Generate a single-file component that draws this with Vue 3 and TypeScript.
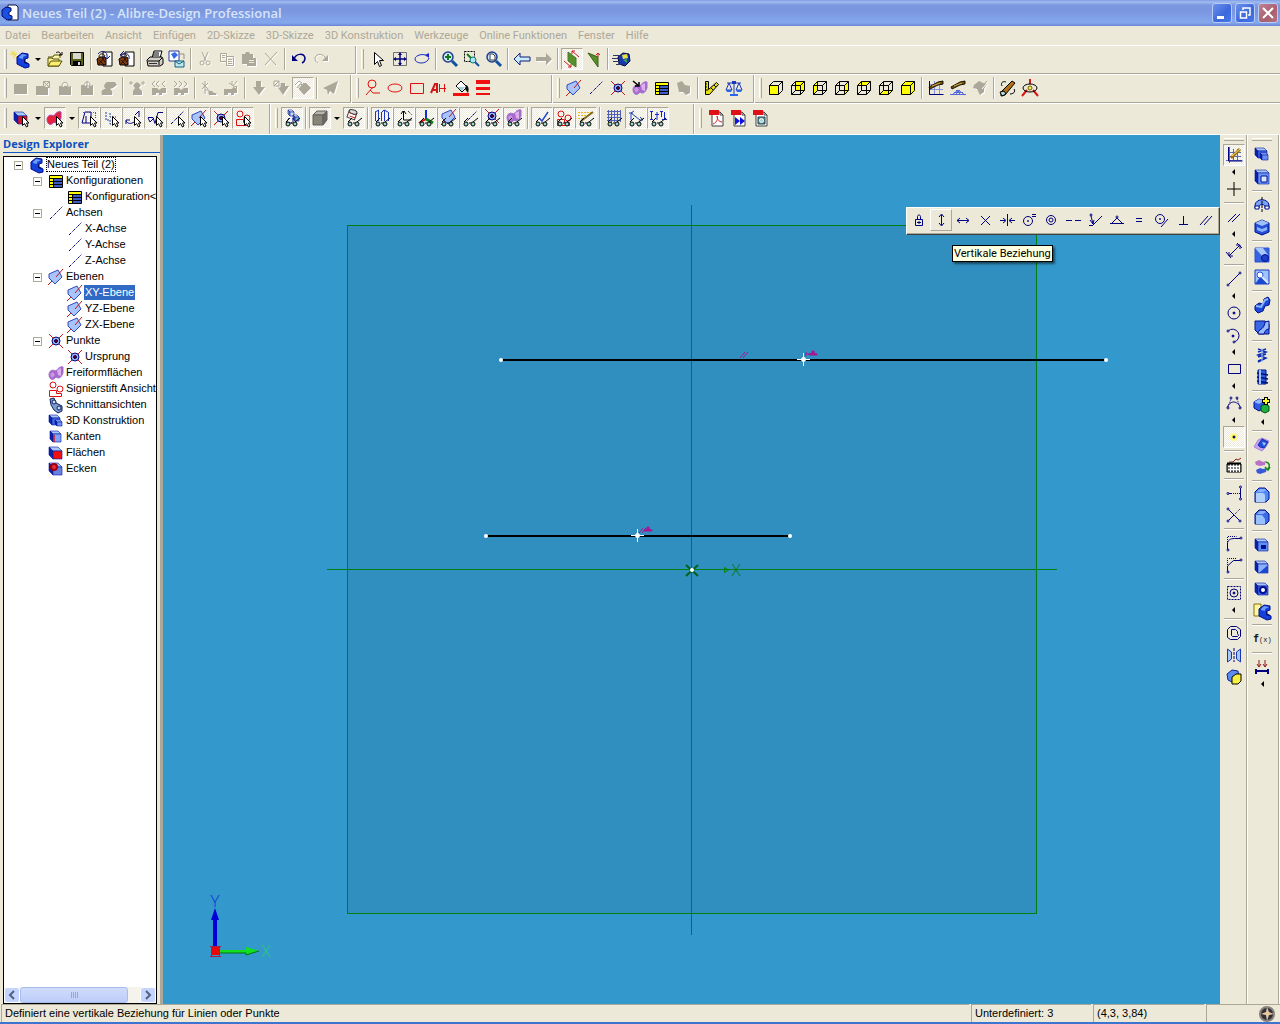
<script setup lang="ts">
import { computed, ref } from 'vue'

/* ---------- drawing helpers for the 16 x 16 icons ---------- */
const NAVY = '#000080'
const RED = '#e01010'
const GREY = '#aca899'

const L = (d: string, c = NAVY, w = 1, extra = ''): string =>
  `<path d="${d}" fill="none" stroke="${c}" stroke-width="${w}" ${extra}/>`
const F = (d: string, c: string, s = 'none', w = 1): string =>
  `<path d="${d}" fill="${c}" stroke="${s}" stroke-width="${w}"/>`
const O = (x: number, y: number, r: number, f = 'none', s = NAVY, w = 1): string =>
  `<circle cx="${x}" cy="${y}" r="${r}" fill="${f}" stroke="${s}" stroke-width="${w}"/>`
const off = (d: string): string =>
  `<path d="${d}" fill="#fff" transform="translate(1 1)"/><path d="${d}" fill="${GREY}"/>`
const offLine = (d: string): string =>
  `<path d="${d}" fill="none" stroke="#fff" transform="translate(1 1)"/><path d="${d}" fill="none" stroke="${GREY}"/>`
const box = (x: number, y: number, w: number, h: number, d: number, front = '#3c6ae6', top = '#a8c6fa', side = '#0c22a8'): string =>
  F(`M${x} ${y}h${w}l${d} ${d}h${-w}z`, top, '#0818a0', 0.6) +
  F(`M${x} ${y}l${d} ${d}v${h}l${-d} ${-d}z`, side, '#0818a0', 0.6) +
  F(`M${x + d} ${y + d}h${w}v${h}h${-w}z`, front, '#0818a0', 0.6)
const cube = (face: string, solid = false): string =>
  (face ? F(face, '#ffff00') : '') +
  L('M1.500 5.500h9v9h-9zM1.500 5.500l4-4h9v9l-4 4M10.500 5.500l4-4', '#000') +
  (solid ? '' : L('M5.500 1.500v9h9M5.500 10.500l-4 4', '#000'))

const cursor = F('M9.500 6.500v9l2-2 2 3.500 1.500-1-1.500-3h2.500z', '#fff', '#000')
const glasses = L('M2 12l4-4M11 12l5-4M7 13h2', '#000') + O(4, 14, 2, '#9fd8d0', '#000') + O(11, 14, 2, '#9fd8d0', '#000')
const planeShape = F('M1 5l9-4 4 7-7 7-6-6z', '#a9c4fb', '#3048c0') + L('M15 0L8 8M0 16l4-4', '#c01818')
const pointShape = L('M1 1l14 14M15 1L1 15', '#d01818') + O(8, 8, 4, '#9db4f0') + O(8, 8, 1.5, '#800020', '#000050')
const blobShape = F('M1 9c1-5 5-4 7-3 2-3 5-5 7-4v6c-2 5-4 6-7 4-3 4-7 3-7-3z', '#a868d0', '#a070c8') + F('M9 5l4-2v8l-3-1z', '#dcb0ec') + F('M2 9l3-2 2 3-3 3z', '#c898e0')
const tableShape = F('M1.500 2.500h13v12h-13z', '#ffff00', '#000') + F('M6 5h8v9H6z', '#3c5cc8') + L('M1 5.500h13M1 8.500h13M1 11.500h13M5.500 5v10', '#000')
const stampShape = O(5, 4, 3, 'none', RED) + O(12, 8, 3, 'none', RED) + L('M1.500 9.500h7v3h5v3h-12z', RED)
const dash = L('M2 14L15 1', NAVY, 1, 'stroke-dasharray="3 1 1 1"')
const partShape = F('M2 5l5-4 6 1v4l-3 1v3l4 2v3l-4 1-8-4z', '#1440dc', '#000c90') + F('M4 5l3-3 5 1-4 2v2l-4-1z', '#6c9cf8') + F('M9 7v4l3 1 1-1-3-1V7z', '#041070')
const bag = F('M0 8l3-2h5l1 2v6H1z', '#7c3c10', '#000') + L('M2 6c0-4 5-4 6-1M2 9l5 5M5 7l3 4M2 13l5-6', '#301000')
const pdf = F('M4 2h8l3 3v11H4z', '#fff', '#404040') + F('M1 0h10v5H1z', '#e01018') + L('M12 2v3h3', '#404040')
const lens = O(6, 6, 5, '#cfe8f8', '#1c3c90', 1.5) + L('M10 10l5 5', '#1050a0', 3)
const grid = L('M1.500 1v14M6.500 1v14M11.500 1v14M1 4.500h14M1 9.500h14M1 14.500h14', '#8894e0')
const tele = F('M1 7l9-5 5-1v3l-5 1-8 4z', '#6b5010', '#201800') + L('M4 6l8-3', '#d8a850')

const icons: Record<string, string> = {
  'Neu': `<g transform="translate(2 1)">${partShape}</g>` + L('M1 0v7M-3 3h7M-2 0l6 6', '#f0dc30'),
  'Öffnen': F('M1 6h5l1-2h6v3', '#fff8a0', '#505000') + F('M1 15V7h4l1 1h6v7z', '#fff39a', '#505000') + F('M1 15l3-5h11l-3 5z', '#ffee70', '#505000') + L('M9 2c2-2 4-1 5 2M12 4h3V1', '#000'),
  'Speichern': F('M1.500 1.500h13v13h-12l-1-1z', '#586018', '#000') + F('M4 2h8v6H4z', '#d8d8d0') + F('M4 10h8v4H4z', '#000') + F('M9 11h2v3H9z', '#ddd'),
  'Einchecken': F('M6 1h9v14H6z', '#fff', '#000') + bag + L('M1 3c3-4 8-3 9 1v3M7 5l3 3 3-3', '#102080'),
  'Auschecken': F('M6 1h9v14H6z', '#fff', '#000') + bag + L('M10 8c1-5-3-7-8-4M5 0L1 4l4 2', '#102080'),
  'Drucken': F('M5 7l2-7h8l-2 7z', '#fff', '#000') + F('M0 9l3-3h12l1 2v5l-3 2H1z', '#d4d0c8', '#000') + L('M1 10h11v4M12 10l3-3M7 2h5M6 4h6', '#000') + F('M2 12h8v1H2z', '#303030'),
  'Senden': F('M0 0h10v10H0z', '#fff', '#2838a0') + F('M2 3l4-2 3 3-4 4z', '#3868e8') + F('M6 10h9v6H6z', '#bfe8f0', '#106080') + L('M6 10l4 3 5-3', '#106080') + L('M11 3h4v5', '#909090'),
  'Ausschneiden': offLine('M5 1l4 9M11 1L7 10M5 10a2 2 0 1 0 .1 4a2 2 0 1 0 0-4M11 10a2 2 0 1 0 .1 4a2 2 0 1 0 0-4'),
  'Kopieren': offLine('M1.500 2.500h6v8h-6zM7.500 5.500h7v9h-7zM3 4.500h3M3 6.500h3M9 8.500h4M9 10.500h4M9 12.500h4'),
  'Einfügen': off('M1 3h3l1-2h3l1 2h3v4h3v8H6v-2H1z') + L('M8 9.500h5M8 11.500h5', '#ece9d8'),
  'Löschen': offLine('M2 2l11 12M14 1L2 14'),
  'Rückgängig': L('M3 8c2-6 10-6 11-1 0 3-1 4-3 5', NAVY, 1.5) + F('M1 4v6h6z', NAVY),
  'Wiederholen': offLine('M13 8C11 2 3 2 2 7c0 3 1 4 3 5') + off('M15 4v6H9z'),
  'Auswählen': F('M4.500 1.500v12l3-3 2 5 2-1-2-5h4z', '#fff', '#000'),
  'Verschieben': F('M1.500 1.500h13v13h-13z', '#ece9d8', '#707070') + L('M8 3v10M3 8h10', NAVY, 1.5) + F('M8 1l2 3H6zM8 15l2-3H6zM1 8l3-2v4zM15 8l-3-2v4z', NAVY),
  'Drehen': L('M13 5c-3-3-12-1-12 3 0 5 12 6 14-1', '#1828c8') + F('M11 4l4-2v5z', '#1828c8'),
  'Zoom': lens + L('M6 3v6M3 6h6', '#107818', 2),
  'Zoom Fenster': L('M.5.5h10v10H.5z', '#000', 1, 'stroke-dasharray="2 1"') + L('M3 3l4 4', '#107818', 2) + O(9, 9, 3, '#a8e8f0', '#107080') + L('M11 11l4 4', '#1050a0', 2),
  'Zoom Alles': lens + F('M4 3h3l2 2v4H4z', '#fff', '#404040'),
  'Vorherige Ansicht': F('M0 8l6-6v4h10v4H6v4z', '#c8ecf8', '#101880'),
  'Nächste Ansicht': off('M16 8l-6-6v4H0v4h10v4z'),
  '2D-Skizze aktivieren': F('M4 1l8 6v9l-8-6z', '#58902c', '#48781c') + L('M15 6L8 0M8 3V0h3M0 10l7 6M7 13v3H4', '#c81818'),
  '3D-Skizze aktivieren': F('M2 2l10 4v10z', '#58902c', '#386018') + L('M12 6V2M10 4l2-2 2 2', '#c81818'),
  'Online': F('M4 6l5-4 6 1 1 7-5 5-6-2z', '#1838b0', '#000840') + F('M8 4l5-1 1 4-5 1z', '#e8e040') + F('M9 9l4-1v4z', '#38a058') + L('M-1 4.500h7M-2 7.500h6M-1 10.500h6M2 13.500h5', '#303860'),

  'Aufsatz linear': off('M1 4h13v10H1z'),
  'Ausschnitt linear': off('M1 6h12v9H1z') + F('M8.500 1.500h6v6h-6z', '#ece9d8', GREY) + L('M9 2l5 5M14 2L9 7', GREY),
  'Lasche': off('M2 6h12v9H2z') + offLine('M5 6c0-5 6-5 6 0'),
  'Flansch': off('M2 5h12v10H2z') + offLine('M5 5c1-4 6-4 6 0M8 1v6'),
  'Ecke': off('M1 15c-1-4 0-6 4-6-3-2-2-5 1-7h8l2 3-4 3-3 1c2 1 3 3 2 6z'),
  'Biegung': off('M4 15v-4l2-3-2-3 4-3 4 3-2 3 3 3v4z') + offLine('M0 3h4M12 3h4M2 1v4M14 1v4'),
  'Abwicklung': off('M1 8h5l2 2 3-2h4v5h-4v2H8v-2H5v2H1z') + offLine('M4 1L1 4l3 3M8 1L5 4l3 3M14 1l-3 3 3 3'),
  'Faltung': off('M1 8h5l2 2 3-2h4v5h-4v2H8v-2H5v2H1z') + offLine('M1 1l3 3-3 3M6 1l3 3-3 3M11 1l3 3-3 3'),
  'Stempel': offLine('M4 1v13M1 3l6 6M7 3L1 9M4 10h4M8 10v4h8') + off('M8 11h3l2 2h2v2H8z'),
  'Loch': off('M1 9h8l2-3h3v7h-3v2H8v-2H5v2H1z') + offLine('M9 1v4M6 3l6 4M14 1l-4 5'),
  'Pfeil A': off('M5 1h5v6h4l-6 8-6-8h3z'),
  'Pfeil B': off('M7 3h5v3h4l-6 9-6-9h3z') + offLine('M1 1h5v5H1zM1 6l5-5'),
  'Pfeil C': off('M6 3h5l5 5-7 7-6-7z') + offLine('M0 5l4-4 3 2M2 8l3-4'),
  'Veröffentlichen': off('M0 8L15 1l-4 13-4-3-2 4-1-5z'),

  'Notiz': O(7, 4, 4, 'none', RED) + L('M8 7l-7 8M5 10l3 3h7', RED),
  'Ellipse': `<ellipse cx="8" cy="8" rx="7" ry="4" fill="none" stroke="${RED}"/>`,
  'Rechteck': L('M1.500 3.500h13v10h-13z', RED),
  'Beschriftung': L('M0 13l4-9h2v9M2 10h4', '#d01818', 2) + L('M8 8.500h7M8.500 4v8M13.500 4v8', RED),
  'Füllen': F('M3 6l5-5 6 6-5 5z', '#fff', '#000') + F('M13 5c3 1 3 5 2 8l-3-4z', '#101010') + F('M4 7h8l-3 4z', '#a0d0d8') + F('M0 13h16v3H0z', '#f01010'),
  'Strichstärke': F('M1 0h14v4H1zM1 7h14v3H1zM1 13h14v2H1z', '#f01010'),

  'Ebene einfügen': planeShape,
  'Achse einfügen': dash,
  'Punkt einfügen': pointShape,
  'Fläche einfügen': blobShape + L('M1 1l6 5M3 6h4V2', '#000', 1.5),
  'Konfiguration': tableShape,
  'Schnitt': off('M1 3l5-2 3 4 5 1v7l-4 2-3-3H3z'),
  'Messen': F('M1.500 1.500h3v8l8-7 2 2-9 10h-4z', '#e8e010', '#000') + L('M1 4h2M1 7h2M1 10h3M7 8l2 2M10 5l2 2', '#000'),
  'Masse': L('M8 1v13M1 3h14M3 3l-3 7h6zM13 3l-3 7h6z', '#1838c0') + F('M0 10h6l-1 2H1zM10 10h6l-1 2h-4zM4 14h8v2H4z', '#2868e8') + F('M6 1h4v3H6z', '#1838c0'),
  'Vorderansicht': cube('M1 5h10v10H1z', true),
  'Rückansicht': cube('M5 1h10v10H5z'),
  'Linke Ansicht': cube('M1 5l4-4v10l-4 4z'),
  'Rechte Ansicht': cube('M11 5l4-4v9l-4 5z'),
  'Draufsicht': cube('M1 5l4-4h10l-4 4z'),
  'Unteransicht': cube('M1 15l4-5h10l-4 5z'),
  'Isometrisch': cube('M1 5l4-4h10v10l-4 4H1z', true),
  'Raster': grid + tele + L('M1.500 1v13.500h14', NAVY),
  'Fluchtpunkt': L('M2 15l6-5 7 5M0 14.500h16M4 12.500h9M6 10l5 5M10 10l-5 5', '#5068d8') + tele,
  'Schatten': off('M2 5l5-4 4 2 4 1-3 5v3l-4 3-3-6-4-1z') + offLine('M15 1l-6 7'),
  'Rotation': F('M1 12L12 1l3 2L5 15l-4 1z', '#b07018', '#000') + L('M2 6c-2-4 2-5 4-4M14 9c2 3-1 5-4 5', '#000') + F('M0 12l4-1 2 3-4 2z', '#b8d8e8', '#000'),
  'Achsendrehung': L('M8-1v5M5 10l-5 6M11 10l5 6', '#d81818', 2) + `<ellipse cx="8" cy="8" rx="7" ry="4" fill="none" stroke="#000"/>` + O(8, 8, 2, '#f8f050', '#706000'),

  'Volumen wählen': box(1, 2, 9, 8, 4, '#e01020') + cursor,
  'Flächen wählen': F('M0 9c1-5 5-4 7-3 2-4 5-5 7-4v6c-2 5-4 6-7 4-3 4-7 3-7-3z', '#e82040', '#a840a0') + cursor,
  'Skizze wählen': L('M1 13l3-11h6v6M1 13h8M5 6v7') + L('M2 2.500h13M14.500 3v6', '#2070a0', 1, 'stroke-dasharray="1 1"') + cursor,
  'Kontur wählen': L('M3 2v8h4v4h5M7 3v4h6', '#2040a0', 1, 'stroke-dasharray="2 1"') + cursor,
  'Bemaßung wählen': L('M1 11c2 3 5 3 8 1M10 5l4-4v6M1 14v-4h4') + cursor,
  'Kante wählen': L('M1 7.500h5l2 6 3-11h5M1 8l2 4 4-4') + cursor,
  'Achse wählen': dash + cursor,
  'Ebene wählen': planeShape + cursor,
  'Punkt wählen': pointShape + cursor,
  'Stift wählen': stampShape + cursor,
  'Komponenten': box(4, 0, 4, 4, 2, '#c8e0f0', '#fff', '#78a0b8') + box(9, 5, 4, 4, 2, '#78b0d8', '#fff', '#4070a0') + L('M5 8l-3 5h6M9 8v4') + glasses,
  'Schattiert': F('M1 5l4-4h10l-4 4z', '#b8b6ac', '#606060') + F('M1 5h10v10H1z', '#888478', '#606060') + F('M11 5l4-4v9l-4 5z', '#6c695f', '#606060'),
  'Schnitt zeigen': `<g transform="rotate(20 7 5)">${F('M2 2h8v7H2z', '#fff', '#404040')}${L('M2 4h8M4 7h6', RED)}<ellipse cx="6" cy="2" rx="4" ry="2" fill="#ddd" stroke="#404040"/></g>` + glasses,
  'Teile zeigen': L('M1.500 2v9M4.500 0v11M7.500 3v8M10.500 0v11M14.500 2v9M1 2l4-2M10 0l4 2M7 3l3-3', '#1838c0') + glasses,
  'Achsen zeigen': L('M7.500 1v9h8M7 1L5 4M8 1l2 3', '#000') + L('M12 1l4 4', '#000', 1, 'stroke-dasharray="1 1"') + glasses,
  'Ursprung zeigen': L('M8 0v9', '#1030d8', 2) + L('M8 9l-7 4', '#e01010', 2) + L('M8 9l7 4', '#108018', 3) + glasses,
  'Ebenen zeigen': `<g transform="translate(1 -1)">${planeShape}</g>` + glasses,
  'Linien zeigen': dash + glasses,
  'Punkte zeigen': `<g transform="translate(0 -2)">${pointShape}</g>` + glasses,
  'Freiform zeigen': `<g transform="translate(0 -2)">${blobShape}</g>` + glasses,
  'Prüfung zeigen': L('M5 8l3 3 6-9', '#2848d0', 1.5) + glasses,
  'Stift zeigen': stampShape + glasses,
  'Licht zeigen': L('M0 2.500h14M0 5.500h9M0 8.500h5', '#f0b820', 1, 'stroke-dasharray="2 1"') + L('M3 11L15 2', '#806820', 2) + glasses,
  'Gitter zeigen': L('M1 1.500h14M1 4.500h14M1 7.500h14M1 10.500h14M2.500 0v12M5.500 0v12M8.500 0v12M11.500 0v12M14.500 0v12', '#5060b8') + glasses,
  'Maße zeigen': L('M3 10V3l3-2M3 3l9 7M1 3h4M12 7l3 3h-4', '#2048c0') + glasses,
  'Text zeigen': L('M1.500 1v9M0 1.500h3M0 9.500h3M5 4.500h4M7 2v8M10 1.500h3M11.500 1v6M14.500 2v8M12 9.500h5', '#1828c8') + glasses,
  'PDF exportieren': pdf + L('M5 14c5-2 5-7 4-8 0 3 2 6 5 6', '#d82028'),
  'PDF 3D': pdf + F('M5 7l5 4-5 4zM10 7l5 4-5 4z', '#1010e0'),
  'PDF Bild': pdf + F('M6 7h7v7H6z', '#608c90', '#204850') + O(9.5, 10.5, 2, '#a0d0d0', '#fff'),

  'Skizziermodus': L('M3.500 0v16M0 13.500h16M7.500 2v12M11.500 2v12M3 9.500h12M3 5.500h12', '#5864c0') + L('M5 11L14 2', '#a07010', 3) + L('M6 9l8-7', '#ffe860') + L('M2.500 0v14h14'),
  'Kreuz': L('M8 1v14M1 8h14', '#000'),
  'Parallel': L('M2 13l8-8M6 13l8-8'),
  'Bemaßung': L('M3 13L14 2M10 2h4v4M3 9v4h4M0 9l5 6M11 0l5 5'),
  'Linie': L('M2 14L14 2') + O(2, 14, 1, '#fff') + O(14, 2, 1, '#fff'),
  'Kreis': O(8, 8, 6) + O(8, 8, 1, NAVY),
  'Bogen': L('M2 4a6.500 6.500 0 1 1 6 11') + O(2, 4, 1, '#fff') + O(7, 9, 1, NAVY) + O(8, 15, 1, '#fff'),
  'Rechteck zeichnen': L('M2.500 3.500h12v9h-12z'),
  'Spline': L('M1 13c3-8 10-8 14 0') + O(2, 13, 1, '#fff') + O(5, 3, 1) + O(11, 3, 1) + O(14, 13, 1, '#fff') + L('M2 12l3-8M11 4l3 8', NAVY, 1, 'stroke-dasharray="1 1"'),
  'Punkt': O(8, 8, 3, '#f8f020', '#fff890', 2) + O(8, 8, 1, NAVY),
  'Tastatur': F('M1 7h14v8H1z', '#888', '#000') + L('M2 9.500h12M2 12.500h12M4.500 7v8M7.500 7v8M10.500 7v8M13.500 7v8', '#fff') + L('M3 5h4l3-3 2 1 3-2', '#802020') + L('M1 6.500h14', '#000', 2),
  'Verlängern': L('M1 8.500h5M14.500 1v14') + L('M7 8.500h7', NAVY, 1, 'stroke-dasharray="1 1"') + O(2, 8.5, 1, '#fff') + O(14.5, 2, 1, '#fff') + O(14.5, 14, 1, '#fff'),
  'Stutzen': L('M2 2l12 12M2 14l6-6') + L('M9 7l5-5', NAVY, 1, 'stroke-dasharray="1 1"') + O(2, 2, 1, '#fff') + O(14, 14, 1, '#fff') + O(2, 14, 1, '#fff'),
  'Verrundung': L('M1.500 15V9c0-4 3-5.500 7-5.500h6') + L('M1.500 9V1.500h9', NAVY, 1, 'stroke-dasharray="1 1"') + O(2, 15, 1, '#fff') + O(15, 3, 1, '#fff'),
  'Fase': L('M1.500 15V9l6-5.500h7') + L('M1.500 8V1.500h9', NAVY, 1, 'stroke-dasharray="1 1"') + O(2, 15, 1, '#fff') + O(15, 3, 1, '#fff'),
  'Muster': O(8, 8, 4) + O(8, 8, 1, NAVY) + L('M1.500 1.500h13v13h-13z', NAVY, 1, 'stroke-dasharray="2 1"'),
  'Versatz': L('M4.500 1.500h6l4 3v7l-3 3h-7l-3-2v-8z') + L('M5.500 4.500h4l2 2v2l1 2-1 1h-5l-1-1z'),
  'Spiegeln': F('M1.500 2l4 3v7l-4 3z', '#a8c8f8', '#1838b0') + F('M14.500 2l-4 3v7l4 3z', '#a8c8f8', '#1838b0') + L('M8 1v14', NAVY, 1, 'stroke-dasharray="3 1"'),
  'Projizieren': F('M1 5l5-4 6 1 1 7-5 5-6-3z', '#5c8cf0', '#102090') + F('M6 8l4-3h5v7l-3 3H6z', '#f8f040', '#000'),

  'Aufsatz': box(1, 1, 9, 7, 3) + box(6, 6, 6, 5, 2, '#6890f4'),
  'Ausschnitt': box(1, 1, 11, 11, 3, '#6c98f4') + F('M7 7h6v6H7z', '#d8e8fc', '#001090'),
  'Drehaufsatz': F('M1 8c1-7 13-7 14 0v3h-4V9c-1-2-5-2-6 0v2H1z', '#7aa4f8', '#001090') + F('M1 9h4v3H1zM11 9h4v3h-4z', '#fff', '#001090') + L('M8 0v16', '#000', 1, 'stroke-dasharray="3 1"'),
  'Drehausschnitt': F('M1 4l7-3 7 3v9l-7 3-7-3z', '#2450d8', '#001090') + F('M1 4l7-3 7 3-7 3z', '#a0c0fa') + F('M3 8l5 2 5-2v3l-5 2-5-2z', '#8cb4fc'),
  'Ausformung': F('M1 1h14v14H1z', '#3464e0', '#3050d0') + F('M1 1h8l5 7-6 1z', '#a8c8fc') + O(11, 11, 3.5, '#1c40c8', '#001090'),
  'Ausformung Schnitt': F('M1 1h14v14H1z', '#a0c4fc', '#1838c0') + F('M1 15l6-8 8 8z', '#1c48d0') + O(6, 6, 3, '#fff', '#2858d8') + L('M8 8l6 6', '#d8e8ff', 2),
  'Sweep': F('M1 9l4-3 4 1 1-5 4-2 2 3-1 5-4 1-2 5-5 2-3-3z', '#1c48d8', '#001090') + L('M2 9l5 1 4-7 3-1', '#90b8fc', 2),
  'Sweep Schnitt': F('M1 2h10l4 3v10H5l-4-4z', '#3868e4', '#001090') + F('M4 15c0-6 6-3 7-12l4-1v8c-3 0-4 2-5 5z', '#98bcfc', '#001090'),
  'Helix': L('M4 2l8 3-8 3 8 3-8 4M4 5l8-3M4 10l8-3M4 14l8-3', '#0c2cb0', 1.5) + L('M8 1v14', '#a8c8fc'),
  'Helix Schnitt': F('M4 1h8v14H4z', '#2c5ce0', '#001090') + L('M3 4l11 2M3 8l11 2M3 12l11 2', '#001070', 1.5) + L('M6 1v14', '#a4c4fc', 2),
  'Boolesch': F('M0 5l5-3 5 2v7l-5 3-5-3z', '#2c5ce0', '#001090') + F('M7 9l4-2 4 2v5l-4 2-4-2z', '#20b040', '#005010') + F('M0 5l5-3 5 2-5 3z', '#90b8fc') + L('M12 0v8M8 4h8', '#000', 4) + L('M12 1v6M9 4h6', '#ffff20', 2),
  'Freiform': F('M0 10l4-7 4-2 7 3-3 6-4 4z', '#c8a0f0', '#a888d8') + F('M4 8l4-6 6 3-4 6-4-1z', '#2050d8', '#1030b0') + F('M8 5l4 1-2 3z', '#a8c8fc'),
  'Freiform ersetzen': F('M1 3l4-2 4 2 3-1-1 4-5 1-4-1z', '#b870c8') + F('M2 11l4-2 3 1 4-1-1 4-6 2-3-1z', '#3858d8') + L('M12 3c4 1 4 4 2 7M11 8l3 3 2-3', '#108818', 1.5),
  'Kante abrunden': F('M1 5l4-4h6l4 4v7l-3 3H1z', '#5088f4', '#001090') + F('M2 6h6c2 0 3 1 3 3v6H2z', '#b0d0fc') + F('M3 5l3-3h5l1 1-3 2z', '#88b0fc'),
  'Kante fasen': F('M1 5l4-4h6l4 4v7l-3 3H1z', '#3c6ce4', '#001090') + F('M2 6h6l3 4v5H2z', '#98c0fc') + F('M3 5l3-3h5l1 1-3 2z', '#88b0fc'),
  'Schale': box(1, 2, 10, 9, 3, '#6090f4') + F('M7 8h5v4H7z', '#001090'),
  'Schräge': box(1, 2, 10, 9, 3, '#88b0fc') + F('M5 14l9-8v8z', '#1c48d0'),
  'Bohrung': box(1, 2, 10, 9, 3) + O(9, 9, 3, '#fff', '#001090', 2),
  'Katalogteil': F('M0 1h7v12H0z', '#fff8a0', '#807010') + `<g transform="translate(3 1)">${partShape}</g>`,
  'Gleichung': '<text x="-1" y="11" font-family="DejaVu Sans Mono, monospace" font-size="10" font-weight="700" fill="#181818">f</text><text x="5" y="11" font-family="Liberation Mono, monospace" font-size="7" fill="#181818">(x)</text>',
  'Direkt': L('M2 10v5M14 10v5M2 12h12', NAVY, 2) + L('M5 1v7M11 1v7M3 5l2 3 2-3M9 5l2 3 2-3', '#901818'),

  'Fixiert': L('M4.500 7.500h7v6h-7zM6.500 7V4.500c0-2 3-2 3 0V7M8 9v3M6 10.500h4'),
  'Vertikal': L('M8.500 3v10M6 5l2.500-3L11 5M6 11l2.500 3 2.500-3'),
  'Horizontal': L('M2 8.500h12M5 6L2 8.500 5 11M11 6l3 2.500-3 2.500'),
  'Schnittpunkt': L('M4 4l9 9M13 4l-9 9'),
  'Symmetrisch': L('M8.500 2v12M1 8.500h5M16 8.500h-5M4 6l3 2.500L4 11M13 6l-3 2.500 3 2.500'),
  'Gleicher Radius': O(7, 9, 4.5) + O(7, 9, 0.5, NAVY) + L('M11 2.500h4M11 4.500h4'),
  'Konzentrisch': O(8, 8, 4.5) + O(8, 8, 2),
  'Kollinear': L('M1 8.500h6M10 8.500h6', NAVY, 1),
  'Auf Linie': L('M6 13l9-9M2 13.500h4M4 4l2 8M3 8l3 4 1-4') + O(4, 3, 1),
  'Mittelpunkt': L('M3 11l5-5 5 5M1 11.500h14') + O(8, 5, 1, '#fff'),
  'Gleich': L('M5 6.500h6M5 9.500h6'),
  'Tangential': O(7, 7, 4.5) + O(7, 7, 0.5, NAVY) + L('M8 15l7-8'),
  'Senkrecht': L('M8.500 4v9M4 12.500h9'),
  'Parallele Beziehung': L('M3 13l8-9M7 13l8-9'),

  part: partShape,
  table: tableShape,
  axis: dash,
  plane: planeShape,
  point: pointShape,
  blob: blobShape,
  stamp: stampShape,
  section: F('M2 2l4-1 2 5 6 3v5l-4 2-4-3-3-5z', '#7c9cd0', '#102060') + O(6, 5, 2, '#c8dcf0', '#102060') + O(11, 11, 2, '#c8dcf0', '#102060'),
  feature: box(1, 2, 8, 7, 3) + box(7, 7, 5, 4, 2, '#6890f4'),
  edge: box(2, 2, 8, 8, 3, '#7ca4f8') + L('M6 6v7', RED, 1.5),
  face: box(1, 2, 9, 8, 4, '#f01010'),
  vertex: box(1, 2, 9, 8, 4, '#6880e0') + O(6, 6, 3, '#e83040', '#a00010', 2),
}

/* ---------- tool bars: '|' separator, '>' menu arrow, '*' pressed ---------- */
interface Tool { kind: 'sep' | 'drop' | 'btn'; name: string; on: boolean }
interface Bar { cls: string; tools: Tool[] }

const parse = (s: string): Tool[] =>
  s.split(',').map((t) => {
    if (t === '|') return { kind: 'sep', name: '', on: false }
    if (t === '>') return { kind: 'drop', name: 'Weitere Optionen', on: false }
    const on = t.startsWith('*')
    return { kind: 'btn', name: on ? t.slice(1) : t, on }
  })
const bar = (cls: string, s: string): Bar => ({ cls, tools: parse(s) })

const rows: Bar[][] = [
  [
    bar('standard', 'Neu,>,Öffnen,Speichern,|,Einchecken,Auschecken,|,Drucken,Senden,|,Ausschneiden,Kopieren,Einfügen,Löschen,|,Rückgängig,Wiederholen'),
    bar('rest', 'Auswählen,Verschieben,Drehen,|,Zoom,Zoom Fenster,Zoom Alles,|,Vorherige Ansicht,Nächste Ansicht,|,*2D-Skizze aktivieren,3D-Skizze aktivieren,|,Online'),
  ],
  [
    bar('sheet', 'Aufsatz linear,Ausschnitt linear,Lasche,Flansch,Ecke,|,Biegung,Abwicklung,Faltung,|,Stempel,Loch,|,Pfeil A,Pfeil B,*Pfeil C,|,Veröffentlichen'),
    bar('markup', 'Notiz,Ellipse,Rechteck,Beschriftung,Füllen,Strichstärke'),
    bar('insert', 'Ebene einfügen,Achse einfügen,Punkt einfügen,Fläche einfügen,Konfiguration,Schnitt,|,Messen,Masse'),
    bar('rest', 'Vorderansicht,Rückansicht,Linke Ansicht,Rechte Ansicht,Draufsicht,Unteransicht,Isometrisch,|,Raster,Fluchtpunkt,Schatten,|,Rotation,Achsendrehung'),
  ],
  [
    bar('filter', 'Volumen wählen,>,*Flächen wählen,>,*Skizze wählen,*Kontur wählen,*Bemaßung wählen,*Kante wählen,*Achse wählen,*Ebene wählen,*Punkt wählen,*Stift wählen'),
    bar('show', '*Komponenten,|,*Schattiert,>,*Schnitt zeigen,|,*Teile zeigen,*Achsen zeigen,*Ursprung zeigen,*Ebenen zeigen,*Linien zeigen,*Punkte zeigen,*Freiform zeigen,|,*Prüfung zeigen,*Stift zeigen,*Licht zeigen,|,Gitter zeigen,*Maße zeigen,*Text zeigen'),
    bar('rest', 'PDF exportieren,PDF 3D,PDF Bild'),
  ],
]

const sideBars: Bar[] = [
  bar('sketch', '*Skizziermodus,>,Kreuz,|,Parallel,>,Bemaßung,|,Linie,>,Kreis,Bogen,>,Rechteck zeichnen,>,Spline,>,*Punkt,|,Tastatur,|,Verlängern,Stutzen,|,Verrundung,Fase,|,Muster,>,|,Versatz,Spiegeln,Projizieren'),
  bar('solid', 'Aufsatz,Ausschnitt,|,Drehaufsatz,Drehausschnitt,|,Ausformung,Ausformung Schnitt,|,Sweep,Sweep Schnitt,|,Helix,Helix Schnitt,|,Boolesch,>,|,Freiform,Freiform ersetzen,|,Kante abrunden,Kante fasen,|,Schale,Schräge,Bohrung,Katalogteil,|,Gleichung,|,Direkt,>'),
]

const relations = ['Fixiert', 'Vertikal', 'Horizontal', 'Schnittpunkt', 'Symmetrisch', 'Gleicher Radius', 'Konzentrisch', 'Kollinear', 'Auf Linie', 'Mittelpunkt', 'Gleich', 'Tangential', 'Senkrecht', 'Parallele Beziehung']

const menus = ['Datei', 'Bearbeiten', 'Ansicht', 'Einfügen', '2D-Skizze', '3D-Skizze', '3D Konstruktion', 'Werkzeuge', 'Online Funktionen', 'Fenster', 'Hilfe']

/* ---------- design explorer ---------- */
interface Node { label: string; icon: string; level: number; parent: boolean }
const node = (level: number, icon: string, label: string, parent = false): Node => ({ level, icon, label, parent })
const nodes: Node[] = [
  node(0, 'part', 'Neues Teil (2)', true),
  node(1, 'table', 'Konfigurationen', true),
  node(2, 'table', 'Konfiguration<1>'),
  node(1, 'axis', 'Achsen', true),
  node(2, 'axis', 'X-Achse'),
  node(2, 'axis', 'Y-Achse'),
  node(2, 'axis', 'Z-Achse'),
  node(1, 'plane', 'Ebenen', true),
  node(2, 'plane', 'XY-Ebene'),
  node(2, 'plane', 'YZ-Ebene'),
  node(2, 'plane', 'ZX-Ebene'),
  node(1, 'point', 'Punkte', true),
  node(2, 'point', 'Ursprung'),
  node(1, 'blob', 'Freiformflächen'),
  node(1, 'stamp', 'Signierstift Ansichten'),
  node(1, 'section', 'Schnittansichten'),
  node(1, 'feature', '3D Konstruktion'),
  node(1, 'edge', 'Kanten'),
  node(1, 'face', 'Flächen'),
  node(1, 'vertex', 'Ecken'),
]
const selected = ref('XY-Ebene')
const closed = ref<string[]>([])
const toggle = (label: string): void => {
  closed.value = closed.value.includes(label)
    ? closed.value.filter((l) => l !== label)
    : [...closed.value, label]
}
const visibleNodes = computed<Node[]>(() => {
  let hideBelow = Infinity
  return nodes.filter((n) => {
    if (n.level > hideBelow) return false
    hideBelow = closed.value.includes(n.label) ? n.level : Infinity
    return true
  })
})
</script>

<template>
  <div class="app">
    <header class="title">
      <svg class="logo" viewBox="0 0 18 18" aria-hidden="true">
        <path d="M7 1h8l2 2v13H7z" fill="#fff" stroke="#101840" />
        <path d="M1 6l4-3 5 1v3l-2 1v3l3 1v3l-5 1-5-4z" fill="#1c50e0" stroke="#000c70" />
      </svg>
      <h1>Neues Teil (2) - Alibre-Design Professional</h1>
      <button class="win" aria-label="Minimieren">
        <svg viewBox="0 0 18 18"><path d="M4 12h7v3H4z" fill="#fff" /></svg>
      </button>
      <button class="win" aria-label="Wiederherstellen">
        <svg viewBox="0 0 18 18"><path d="M7 6V4h7v7h-2M4.500 8h6v6h-6z" fill="none" stroke="#fff" stroke-width="1.500" /></svg>
      </button>
      <button class="win close" aria-label="Schließen">
        <svg viewBox="0 0 18 18"><path d="M4 4l10 10M14 4L4 14" stroke="#fff" stroke-width="2" /></svg>
      </button>
    </header>

    <nav class="menu">
      <button v-for="m in menus" :key="m">{{ m }}</button>
    </nav>

    <div v-for="(row, r) in rows" :key="r" class="row">
      <div v-for="b in row" :key="b.cls" class="bar" :class="b.cls" role="toolbar">
        <span class="grip"></span>
        <template v-for="(t, i) in b.tools" :key="i">
          <span v-if="t.kind === 'sep'" class="sep"></span>
          <button v-else-if="t.kind === 'drop'" class="drop" :aria-label="t.name"></button>
          <button v-else class="tool" :class="{ on: t.on }" :aria-label="t.name">
            <svg class="ico" viewBox="0 0 16 16" v-html="icons[t.name]"></svg>
          </button>
        </template>
      </div>
    </div>

    <div class="work">
      <aside class="explorer">
        <h2>Design Explorer</h2>
        <div class="tree">
          <ul>
            <li v-for="n in visibleNodes" :key="n.label" :class="'level' + n.level">
              <button v-if="n.parent" class="expand" :aria-label="n.label + ' umschalten'" @click="toggle(n.label)">
                <svg viewBox="0 0 9 9">
                  <path d="M2 4.500h5" stroke="#000" />
                  <path v-if="closed.includes(n.label)" d="M4.500 2v5" stroke="#000" />
                </svg>
              </button>
              <span v-else class="noexpand"></span>
              <svg class="ico" viewBox="0 0 16 16" v-html="icons[n.icon]"></svg>
              <button class="label" :class="{ picked: n.label === selected, root: n.level === 0 }" @click="selected = n.label">{{ n.label }}</button>
            </li>
          </ul>
          <div class="hscroll">
            <button aria-label="Nach links"><svg viewBox="0 0 14 14"><path d="M9 3L5 7l4 4" fill="none" stroke="#4d6185" stroke-width="2" /></svg></button>
            <div class="track"><span class="thumb"><i></i><i></i><i></i><i></i></span></div>
            <button aria-label="Nach rechts"><svg viewBox="0 0 14 14"><path d="M5 3l4 4-4 4" fill="none" stroke="#4d6185" stroke-width="2" /></svg></button>
          </div>
        </div>
      </aside>

      <main class="view">
        <svg class="scene" viewBox="0 0 1057 869" aria-label="Skizze">
          <g shape-rendering="crispEdges">
            <rect x="184.500" y="90.500" width="689" height="688" fill="#318fbf" stroke="#008010" />
            <path d="M528.500 70v730M164 434.500h730" stroke="#008010" />
          </g>
          <path d="M338 225h605M323 401h304" stroke="#000" stroke-width="2" />
          <g fill="#fff">
            <circle cx="338" cy="225" r="2" /><circle cx="943" cy="225" r="2" />
            <circle cx="323" cy="401" r="2" /><circle cx="627" cy="401" r="2" />
          </g>
          <g stroke="#a01c94" fill="none">
            <path d="M577 223l5-6M580 223l5-6M642 219h8M643 217v4M476 398l4-5M479 398l4-5" />
            <path d="M646 220h8v-1l-3-1v-2h-2v2l-3 1zM481 396h8v-1l-3-1v-2h-2v2l-3 1z" fill="#b01090" />
          </g>
          <g fill="#fff" stroke="#fff">
            <path d="M640.500 218v13M634 224.500h13M474.500 394v13M468 400.500h13" />
            <circle cx="640.500" cy="224.500" r="2" /><circle cx="474.500" cy="400.500" r="2" />
          </g>
          <path d="M523 430l12 11M535 430l-12 11" stroke="#046020" stroke-width="2" />
          <circle cx="529" cy="435" r="2" fill="#fff" />
          <path d="M561.500 432.500v5l4-2.500z" fill="none" stroke="#008010" />
          <text class="axis" x="573" y="441" text-anchor="middle" fill="#007820">X</text>
          <path d="M50 815v-30h-2l4-12 4 12h-2v30z" fill="#0000d8" />
          <path d="M57 815h26v-3l13 4-13 4v-2H57z" fill="#10e020" />
          <path d="M57 818h26v2l13-4" fill="none" stroke="#087018" />
          <path d="M48 812h8v8h-8z" fill="#e80808" />
          <path d="M47 811.500h11M47 821.500h11M48.500 812v9M56.500 812v9" stroke="#a02048" />
          <text class="axis" x="52" y="772" text-anchor="middle" fill="#1030d0">Y</text>
          <text class="axis" x="103" y="822" text-anchor="middle" fill="#28c878">X</text>
        </svg>

        <div class="float" role="toolbar">
          <button v-for="name in relations" :key="name" class="tool" :class="{ hover: name === 'Vertikal' }" :aria-label="name">
            <svg class="ico" viewBox="0 0 16 16" v-html="icons[name]"></svg>
          </button>
          <div class="tip" role="tooltip">Vertikale Beziehung</div>
        </div>
      </main>

      <div v-for="b in sideBars" :key="b.cls" class="side" role="toolbar">
        <span class="grip"></span>
        <template v-for="(t, i) in b.tools" :key="i">
          <span v-if="t.kind === 'sep'" class="sep"></span>
          <button v-else-if="t.kind === 'drop'" class="drop" :aria-label="t.name"></button>
          <button v-else class="tool" :class="{ on: t.on }" :aria-label="t.name">
            <svg class="ico" viewBox="0 0 16 16" v-html="icons[t.name]"></svg>
          </button>
        </template>
      </div>
    </div>

    <footer class="status">
      <span class="cell message">Definiert eine vertikale Beziehung für Linien oder Punkte</span>
      <span class="cell state">Unterdefiniert: 3</span>
      <span class="cell coords">(4,3, 3,84)</span>
      <span class="cell corner">
        <svg viewBox="0 0 16 16" aria-hidden="true">
          <circle cx="8" cy="8" r="7" fill="#30303c" stroke="#888078" stroke-width="2" />
          <path d="M8 1l2 5 5 2-5 1-2 6-1-6-5-1 5-2z" fill="#e8c8a0" />
        </svg>
      </span>
    </footer>
  </div>
</template>

<style>
body {
  overflow: hidden;
}
</style>

<style scoped>
.app {
  display: flex;
  flex-direction: column;
  height: 100vh;
  box-sizing: border-box;
  border-bottom: 2px solid #3c74d0;
  background: #ece9d8;
  font: 11px/16px "Liberation Sans", Arial, sans-serif;
  color: #000;
}
button {
  margin: 0;
  padding: 0;
  border: 0;
  background: none;
  font: inherit;
  color: inherit;
  flex: none;
}
.title {
  flex: none;
  display: flex;
  align-items: center;
  gap: 3px;
  height: 26px;
  box-sizing: border-box;
  padding: 0 2px 1px 1px;
  background: linear-gradient(#7f9ce4 0, #a2bcf0 2px, #7c98e0 5px, #7a96df 11px, #82a4ea 20px, #84a6ea 23px, #6a84d8 26px);
}
.logo {
  width: 18px;
  height: 18px;
  flex: none;
}
h1 {
  flex: 1;
  margin: 0;
  font: 600 13px/20px "Open Sans", "Noto Sans", sans-serif;
  color: #d8e4f8;
}
.win {
  width: 20px;
  height: 20px;
  box-sizing: border-box;
  border: 1px solid #b8ccf4;
  border-radius: 3px;
  background: linear-gradient(135deg, #6c90ec, #3c68dc 60%, #4878ec);
}
.win svg {
  display: block;
}
.close {
  background: linear-gradient(135deg, #c08090, #a86070 60%, #b87080);
}
.menu {
  flex: none;
  display: flex;
  gap: 11px;
  height: 19px;
  padding-left: 5px;
  border-bottom: 1px solid #fff;
  font-family: Roboto, "Liberation Sans", sans-serif;
  line-height: 18px;
  color: #aca899;
}
.row {
  flex: none;
  display: flex;
  height: 28px;
  border-bottom: 1px solid #fff;
  box-shadow: inset 0 -1px #aca899;
}
.row + .row + .row {
  height: 30px;
  box-shadow: none;
}
.bar {
  display: flex;
  align-items: center;
  flex: none;
  box-sizing: border-box;
  padding: 0 0 2px 4px;
  border-right: 1px solid #fff;
  box-shadow: inset -1px 0 #aca899;
  overflow: hidden;
}
.standard { width: 357px; }
.sheet { width: 352px; }
.markup { width: 201px; }
.insert { width: 202px; }
.filter { width: 271px; }
.show { width: 424px; }
.rest {
  flex: 1;
  border-right: 0;
  box-shadow: none;
}
.bar .grip {
  flex: none;
  width: 1px;
  height: 20px;
  margin-right: 3px;
  border-left: 1px solid #fff;
  border-right: 1px solid #aca899;
}
.tool {
  display: flex;
  align-items: center;
  justify-content: center;
  width: 22px;
  height: 22px;
  box-sizing: border-box;
  border: 1px solid transparent;
}
.tool.on {
  border-color: #aca899 #fff #fff #aca899;
  background: repeating-conic-gradient(#fff 0 25%, #ece9d8 0 50%) 0 0 / 2px 2px;
}
.tool.hover {
  border-color: #fff #aca899 #aca899 #fff;
}
.ico {
  display: block;
  flex: none;
  width: 16px;
  height: 16px;
  overflow: visible;
}
.bar .sep {
  flex: none;
  width: 0;
  height: 22px;
  margin: 0 2px;
  border-left: 1px solid #aca899;
  border-right: 1px solid #fff;
}
.drop {
  display: flex;
  align-items: center;
  justify-content: center;
  width: 12px;
  height: 22px;
}
.drop::before {
  content: "";
  border: 3px solid transparent;
  border-top-color: #000;
  border-bottom: 0;
}
.work {
  flex: 1;
  display: flex;
  min-height: 0;
}
.explorer {
  flex: none;
  display: flex;
  flex-direction: column;
  width: 160px;
  box-sizing: border-box;
  padding-left: 3px;
}
h2 {
  margin: 0 0 3px;
  border-bottom: 1px solid #1058c8;
  font: bold 11px/17px "Open Sans", "Noto Sans", sans-serif;
  color: #0c50c0;
}
.tree {
  flex: 1;
  display: flex;
  flex-direction: column;
  min-height: 0;
  margin-right: 3px;
  border: 1px solid #000;
  background: #fff;
}
ul {
  flex: 1;
  min-height: 0;
  margin: 0;
  padding: 0;
  list-style: none;
  overflow: hidden;
}
li {
  display: flex;
  align-items: flex-start;
  height: 16px;
  white-space: nowrap;
}
.level0 { padding-left: 10px; }
.level1 { padding-left: 29px; }
.level2 { padding-left: 48px; }
.expand,
.noexpand {
  flex: none;
  width: 9px;
  height: 9px;
  box-sizing: border-box;
  margin: 4px 6px 0 0;
}
.expand {
  outline: 1px solid #aca899;
  outline-offset: -1px;
}
.expand svg {
  display: block;
}
.label {
  height: 15px;
  margin-left: 1px;
  padding: 0 1px;
  line-height: 15px;
}
.root {
  outline: 1px dotted #000;
  outline-offset: -1px;
}
.picked {
  background: #316ac5;
  color: #fff;
}
.hscroll {
  flex: none;
  display: flex;
  height: 16px;
  background: #f4f3ec;
}
.hscroll button {
  width: 16px;
  height: 16px;
  box-sizing: border-box;
  border: 1px solid #fff;
  border-radius: 3px;
  background: #c4d4fc;
}
.hscroll svg {
  display: block;
}
.track {
  flex: 1;
  display: flex;
}
.thumb {
  display: flex;
  align-items: center;
  justify-content: center;
  gap: 1px;
  width: 90%;
  box-sizing: border-box;
  border: 1px solid #a8bcec;
  border-radius: 3px;
  background: linear-gradient(#d0dcfc, #bccdfa);
}
.thumb i {
  width: 1px;
  height: 6px;
  background: #8ca8e8;
}
.view {
  position: relative;
  flex: 1;
  min-width: 0;
  border-left: 3px solid #aca899;
  background: #3399cc;
}
.scene {
  display: block;
  width: 100%;
  height: 100%;
}
.axis {
  font: 300 17px/17px "Open Sans", "Liberation Sans", sans-serif;
}
.float {
  position: absolute;
  top: 72px;
  right: 0;
  display: flex;
  padding: 1px 3px 3px 1px;
  border: 1px solid;
  border-color: #fff #404040 #404040 #fff;
  box-shadow: inset -1px -1px #aca899;
  background: #ece9d8;
}
.tip {
  position: absolute;
  top: 37px;
  left: 45px;
  padding: 0 1px;
  border: 1px solid #000;
  background: #ffffe1;
  box-shadow: 2px 2px 2px rgba(0, 0, 0, 0.5);
  font-family: Roboto, "Liberation Sans", sans-serif;
  line-height: 15px;
  white-space: nowrap;
}
.side {
  flex: none;
  display: flex;
  flex-direction: column;
  align-items: center;
  width: 28px;
  box-sizing: border-box;
  padding-top: 3px;
  border-right: 1px solid #fff;
  box-shadow: inset -1px 0 #aca899;
}
.side:last-child {
  width: 32px;
  padding-right: 3px;
}
.side .grip {
  flex: none;
  width: 20px;
  height: 1px;
  margin-bottom: 3px;
  border-top: 1px solid #fff;
  border-bottom: 1px solid #aca899;
}
.side .sep {
  flex: none;
  width: 20px;
  height: 0;
  margin: 2px 0;
  border-top: 1px solid #aca899;
  border-bottom: 1px solid #fff;
}
.side .drop {
  width: 22px;
  height: 12px;
}
.side .drop::before {
  border: 3px solid transparent;
  border-right-color: #000;
  border-left: 0;
}
.status {
  flex: none;
  display: flex;
  gap: 2px;
  height: 18px;
  padding-left: 1px;
}
.cell {
  box-sizing: border-box;
  padding-left: 3px;
  border-top: 1px solid #aca899;
  border-left: 1px solid #aca899;
  line-height: 17px;
  white-space: nowrap;
}
.message { flex: 1; }
.state { width: 120px; }
.coords { width: 111px; }
.corner {
  display: flex;
  align-items: center;
  justify-content: flex-end;
  width: 74px;
  padding-right: 5px;
}
.corner svg {
  width: 16px;
  height: 16px;
}
</style>
